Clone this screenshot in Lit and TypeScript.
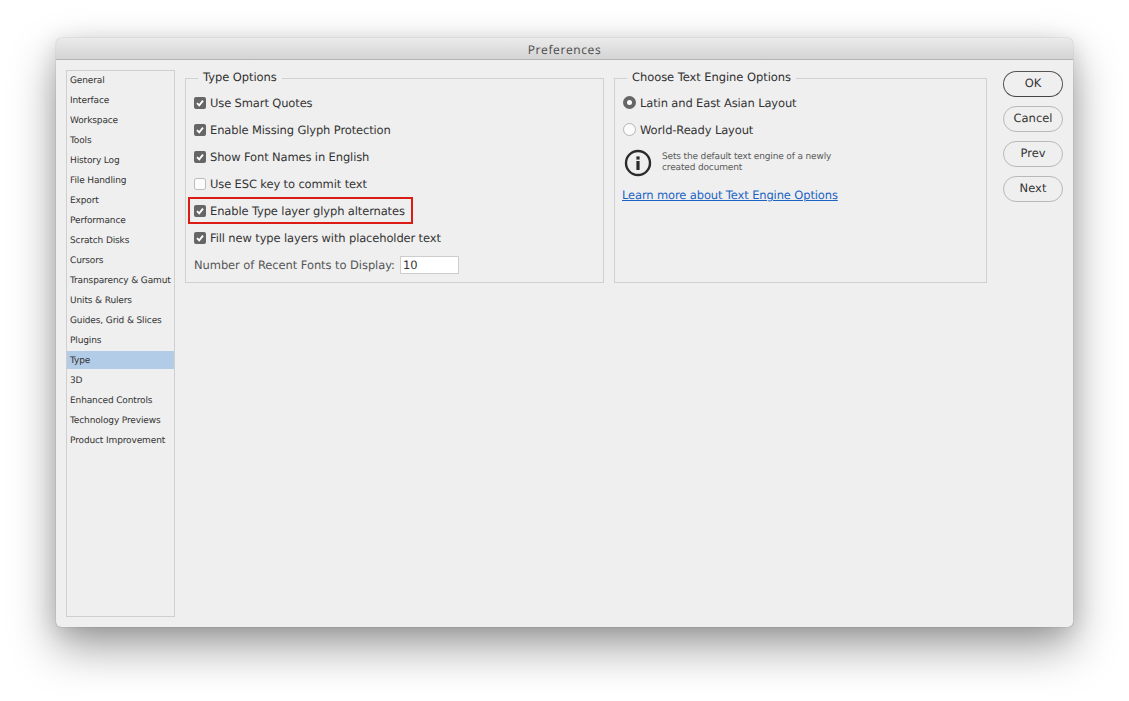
import { LitElement, html, css, svg } from "lit";
import { customElement } from "lit/decorators.js";

const NAV = ["General","Interface","Workspace","Tools","History Log","File Handling","Export","Performance","Scratch Disks","Cursors","Transparency & Gamut","Units & Rulers","Guides, Grid & Slices","Plugins","Type","3D","Enhanced Controls","Technology Previews","Product Improvement"];
const OPTS: [string, boolean, boolean][] = [
  ["Use Smart Quotes", true, false],
  ["Enable Missing Glyph Protection", true, false],
  ["Show Font Names in English", true, false],
  ["Use ESC key to commit text", false, false],
  ["Enable Type layer glyph alternates", true, true],
  ["Fill new type layers with placeholder text", true, false],
];

@customElement("app-root")
export class AppRoot extends LitElement {
  static styles = css`
    :host { display: block; height: 701px; box-sizing: border-box; padding: 38px 56px 0; background: #fff; overflow: hidden;
      font-family: "DejaVu Sans", sans-serif; color: #2e2e2e; text-rendering: geometricPrecision; }
    .win { width: 1017px; height: 589px; border-radius: 6px 6px 5px 5px; background: #efefef; display: flex; flex-direction: column;
      box-shadow: 0 0 1px rgba(0,0,0,.45), 0 20px 46px rgba(0,0,0,.38), 0 4px 22px rgba(0,0,0,.12); overflow: visible; }
    .title { height: 21px; flex: none; border-radius: 6px 6px 0 0; background: linear-gradient(#ebebeb, #d4d4d4); border-bottom: 1px solid #b4b4b4;
      text-align: center; font-size: 12px; line-height: 23px; color: #4a4a4a; font-family: "Open Sans", sans-serif; letter-spacing: .6px; }
    .body { flex: 1; display: flex; padding: 10px 10px 10px; min-height: 0; }
    .nav { width: 109px; flex: none; box-sizing: border-box; border: 1px solid #cfcfcf; margin: 0 10px 0 0; padding: 0; list-style: none; }
    .nav li { height: 20px; box-sizing: border-box; padding: 0 0 0 3px; font-size: 9px; line-height: 20px; white-space: nowrap; color: #333; letter-spacing: -.13px; }
    .nav li.sel { background: #b2cbe6; height: 18px; margin: 0 0 2px; }
    .groups { display: flex; gap: 10px; align-items: flex-start; }
    fieldset { margin: 0; box-sizing: border-box; height: 213px; border: 1px solid #d0d0d0; padding: 0; }
    .g1 { width: 419px; } .g2 { width: 373px; }
    legend { margin-left: 12px; padding: 0 5px; height: 16px; font-size: 11.5px; letter-spacing: -.06px; line-height: 15px; color: #2e2e2e; }
    .stack { display: flex; flex-direction: column; padding: 3px 0 0 8px; }
    .row { position: relative; height: 27px; display: flex; align-items: center; gap: 4px; font-size: 11.5px; letter-spacing: -.13px; white-space: nowrap; color: #333; }
    .box { width: 12px; height: 12px; flex: none; border-radius: 2px; background: #666; display: flex; align-items: center; justify-content: center; }
    .box.off { background: #fbfbfb; box-sizing: border-box; border: 1px solid #bdbdbd; }
    .box svg { width: 10px; height: 10px; }
    .mark { position: absolute; left: -6px; top: 0; width: 225px; height: 27px; box-sizing: border-box; border: 2px solid #dc1c14; }
    .num { color: #555; gap: 5px; letter-spacing: -.07px; }
    .input { width: 59px; height: 18px; box-sizing: border-box; background: #fff; border: 1px solid #cdcdcd; font-size: 11.5px; line-height: 16px; padding-left: 2px; color: #333; }
    .radio { width: 13px; height: 13px; box-sizing: border-box; flex: none; border-radius: 50%; background: #fbfbfb; border: 1px solid #b5b5b5; }
    .radio.on { background: #fff; border: 4px solid #666; }
    .r2 { gap: 4px; }
    .info { display: flex; align-items: center; gap: 10px; padding: 6px 0 0 1px; height: 27px; }
    .info svg { width: 28px; height: 28px; flex: none; }
    .note { font-size: 9px; line-height: 11px; color: #5a5a5a; letter-spacing: -.15px; white-space: nowrap; padding-top: 1px; }
    .link { display: block; margin-top: 11px; margin-left: -1px; font-size: 11.5px; letter-spacing: -.13px; line-height: 16px; color: #1a63c4; text-decoration: underline; white-space: nowrap; }
    .btns { margin-left: 16px; width: 60px; flex: none; display: flex; flex-direction: column; gap: 9px; padding-top: 1px; }
    button { all: unset; box-sizing: border-box; width: 60px; height: 26px; padding-bottom: 3px; border: 1px solid #b9b9b9; border-radius: 13px; text-align: center; font-size: 11.5px; line-height: 16px; color: #333; font-family: inherit; }
    button.def { border: 1px solid #555; border-bottom-color: #444; }
  `;

  private check() {
    return svg`<svg viewBox="0 0 10 10"><path d="M2 5.2 4.2 7.4 8 2.6" fill="none" stroke="#fff" stroke-width="1.9"/></svg>`;
  }

  render() {
    return html`
      <div class="win">
        <div class="title">Preferences</div>
        <div class="body">
          <ul class="nav">${NAV.map(n => html`<li class=${n === "Type" ? "sel" : ""}>${n}</li>`)}</ul>
          <div class="groups">
            <fieldset class="g1">
              <legend>Type Options</legend>
              <div class="stack">
                ${OPTS.map(([t, on, mark]) => html`
                  <div class="row">
                    <span class="box ${on ? "" : "off"}">${on ? this.check() : ""}</span>${t}
                    ${mark ? html`<span class="mark"></span>` : ""}
                  </div>`)}
                <div class="row num">Number of Recent Fonts to Display: <span class="input">10</span></div>
              </div>
            </fieldset>
            <fieldset class="g2">
              <legend>Choose Text Engine Options</legend>
              <div class="stack">
                <div class="row r2"><span class="radio on"></span>Latin and East Asian Layout</div>
                <div class="row r2"><span class="radio"></span>World-Ready Layout</div>
                <div class="info">
                  <svg viewBox="0 0 28 28"><circle cx="14" cy="14" r="12" fill="none" stroke="#2b2b2b" stroke-width="2.4"/><rect x="12.4" y="12" width="3.2" height="9" fill="#2b2b2b"/><rect x="12.4" y="7.4" width="3.2" height="3.2" fill="#2b2b2b"/></svg>
                  <div class="note">Sets the default text engine of a newly<br>created document</div>
                </div>
                <span class="link">Learn more about Text Engine Options</span>
              </div>
            </fieldset>
          </div>
          <div class="btns">
            <button class="def">OK</button><button>Cancel</button><button>Prev</button><button>Next</button>
          </div>
        </div>
      </div>`;
  }
}
